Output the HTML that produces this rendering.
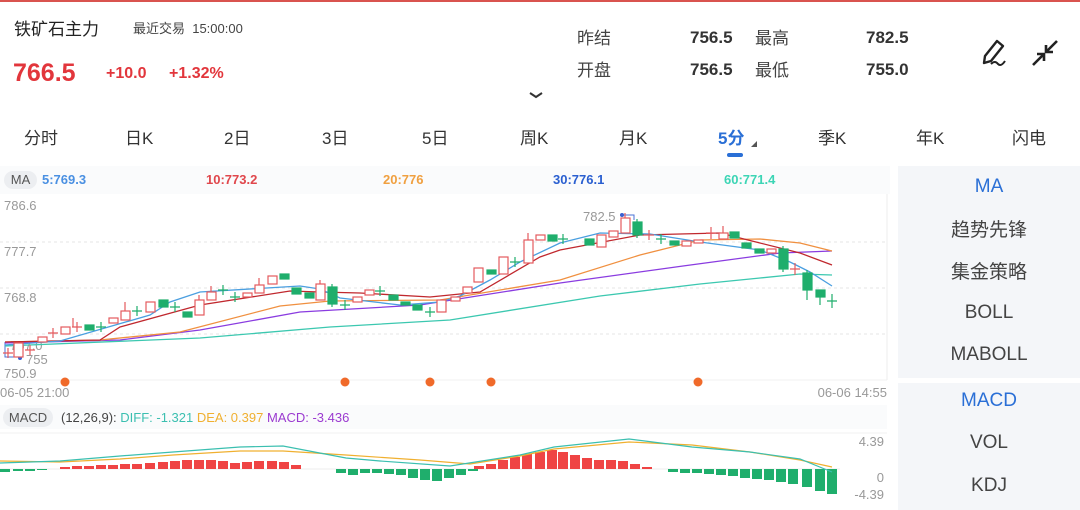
<!DOCTYPE html>
<html><head><meta charset="utf-8"><style>
*{margin:0;padding:0;box-sizing:border-box}
body{width:1080px;height:510px;overflow:hidden;background:#fff;font-family:"Liberation Sans","Noto Sans CJK SC",sans-serif;position:relative;color:#333}
.a{position:absolute;white-space:nowrap}
.tab{position:absolute;top:124px;font-size:17px;color:#333}
.rp{position:absolute;left:898px;width:182px;background:#f4f6f9}
.ri{position:absolute;width:182px;text-align:center;font-size:19px;color:#444}
</style></head><body>
<div class="a" style="left:0;top:0;width:1080px;height:2px;background:#d9534f"></div>
<div class="a" style="left:14px;top:15px;font-size:17px;color:#222">铁矿石主力</div>
<div class="a" style="left:133px;top:18px;font-size:13px;color:#444">最近交易&nbsp;&nbsp;15:00:00</div>
<div class="a" style="left:13px;top:59px;font-size:25px;font-weight:bold;color:#e2363c">766.5</div>
<div class="a" style="left:106px;top:65px;font-size:16px;font-weight:bold;color:#e2363c">+10.0</div>
<div class="a" style="left:169px;top:65px;font-size:16px;font-weight:bold;color:#e2363c">+1.32%</div>
<div class="a" style="left:577px;top:24px;font-size:17px;color:#444">昨结</div>
<div class="a" style="left:690px;top:28px;font-size:17px;font-weight:bold;color:#333">756.5</div>
<div class="a" style="left:755px;top:24px;font-size:17px;color:#444">最高</div>
<div class="a" style="left:866px;top:28px;font-size:17px;font-weight:bold;color:#333">782.5</div>
<div class="a" style="left:577px;top:56px;font-size:17px;color:#444">开盘</div>
<div class="a" style="left:690px;top:60px;font-size:17px;font-weight:bold;color:#333">756.5</div>
<div class="a" style="left:755px;top:56px;font-size:17px;color:#444">最低</div>
<div class="a" style="left:866px;top:60px;font-size:17px;font-weight:bold;color:#333">755.0</div>
<svg class="a" style="left:0;top:0" width="1080" height="166">
<path d="M530 93 L536 97 L542 93" fill="none" stroke="#333" stroke-width="2"/>
<path d="M985 56 L997 41 L1003 46 L991 61 L984 63 Z" fill="none" stroke="#222" stroke-width="2.4" stroke-linejoin="round"/>
<path d="M991 64 q4 -4 7 0 q3 3 7 -3" fill="none" stroke="#222" stroke-width="2"/>
<path d="M1057 41 L1047 51 M1046 45 V52 H1053 M1033 65 L1043 55 M1044 61 V54 H1037" fill="none" stroke="#222" stroke-width="2.6"/>
<rect x="727" y="153" width="16" height="4" rx="2" fill="#2a6fd6"/>
<path d="M751 147 L757 147 L757 141 Z" fill="#555"/>
</svg>
<div class="tab" style="left:24px">分时</div>
<div class="tab" style="left:125px">日K</div>
<div class="tab" style="left:224px">2日</div>
<div class="tab" style="left:322px">3日</div>
<div class="tab" style="left:422px">5日</div>
<div class="tab" style="left:520px">周K</div>
<div class="tab" style="left:619px">月K</div>
<div class="tab" style="left:718px;color:#2a6fd6;font-weight:bold">5分</div>
<div class="tab" style="left:818px">季K</div>
<div class="tab" style="left:916px">年K</div>
<div class="tab" style="left:1012px">闪电</div>

<div class="a" style="left:0;top:166px;width:890px;height:28px;background:#fafbfc"></div>
<div class="a" style="left:4px;top:171px;width:33px;height:18px;border-radius:9px;background:#eceef1;font-size:13px;color:#555;text-align:center;line-height:18px">MA</div>
<div class="a" style="left:42px;top:172px;font-size:13px;font-weight:bold;color:#4a90e2">5:769.3</div>
<div class="a" style="left:206px;top:172px;font-size:13px;font-weight:bold;color:#e0474c">10:773.2</div>
<div class="a" style="left:383px;top:172px;font-size:13px;font-weight:bold;color:#f0a040">20:776</div>
<div class="a" style="left:553px;top:172px;font-size:13px;font-weight:bold;color:#2a5fd0">30:776.1</div>
<div class="a" style="left:724px;top:172px;font-size:13px;font-weight:bold;color:#3cd5b5">60:771.4</div>

<div class="rp" style="top:166px;height:212px"></div>
<div class="rp" style="top:383px;height:127px"></div>
<div class="ri" style="left:898px;top:176px;color:#2a6fd6">MA</div>
<div class="ri" style="left:898px;top:215px">趋势先锋</div>
<div class="ri" style="left:898px;top:257px">集金策略</div>
<div class="ri" style="left:898px;top:302px">BOLL</div>
<div class="ri" style="left:898px;top:344px">MABOLL</div>
<div class="ri" style="left:898px;top:390px;color:#2a6fd6">MACD</div>
<div class="ri" style="left:898px;top:432px">VOL</div>
<div class="ri" style="left:898px;top:475px">KDJ</div>

<svg class="a" style="left:0;top:194px" width="890" height="316" viewBox="0 194 890 316">
<g stroke="#e6e6e6" stroke-dasharray="3 3" stroke-width="1">
<line x1="0" y1="242" x2="887" y2="242"/><line x1="0" y1="288" x2="887" y2="288"/><line x1="0" y1="334" x2="887" y2="334"/>
</g>
<line x1="887" y1="194" x2="887" y2="380" stroke="#eee"/>
<line x1="0" y1="380" x2="887" y2="380" stroke="#f0f0f0"/>
<g font-size="13" fill="#999" font-family="Liberation Sans,sans-serif">
<text x="4" y="210">786.6</text><text x="4" y="256">777.7</text><text x="4" y="302">768.8</text><text x="4" y="378">750.9</text>
<text x="26" y="364">755</text><text x="583" y="221">782.5</text>
<text x="10" y="350">757.0</text>
</g>
<path d="M5 342 V357 H20 M20 357 " fill="none" stroke="#4a72d6" stroke-width="1"/>
<circle cx="20" cy="358" r="2" fill="#3a5fd0"/>
<path d="M620 215 H634 V220" fill="none" stroke="#4a72d6"/><circle cx="622" cy="215" r="2" fill="#3a5fd0"/>
<g fill="none" stroke-width="1.3">
<polyline stroke="#3cc8b0" points="5,346 200,338 330,327 450,320 600,296 700,284 760,278 800,274 832,275"/>
<polyline stroke="#8a3ce0" points="5,343 120,340 200,330 300,312 420,305 560,283 683,266 780,253 832,251"/>
<polyline stroke="#f09040" points="5,342 100,340 180,332 280,306 330,301 440,300 560,280 640,255 700,240 760,239 800,243 832,251"/>
<polyline stroke="#c0282e" points="5,342 100,340 120,327 200,305 290,291 320,292 360,293 430,297 480,292 540,257 560,250 640,235 720,233 760,243 800,253 832,265"/>
<polyline stroke="#4a9fe0" points="5,345 60,341 150,315 170,302 200,292 300,286 320,289 340,298 400,305 440,302 460,296 490,280 520,262 560,243 600,233 650,234 700,242 760,250 790,262 810,272 832,286"/>
</g>
<g fill="#fff" stroke="#e45a5e" stroke-width="1.2">
<path d="M8 348V358M3 353H13M30 345V355M25 350H35M53 328V338M48 333H58M77 322V332M72 327H82M649 230V240M644 235H654M711 227V239M706 233H716M795 263V275M790 269H800"/>
<rect x="14" y="343" width="9" height="14"/><rect x="38" y="337" width="9" height="5"/>
<rect x="61" y="327" width="9" height="7"/><rect x="109" y="318" width="9" height="5"/>
<rect x="121" y="311" width="9" height="9"/><rect x="146" y="302" width="9" height="10"/>
<rect x="195" y="300" width="9" height="15"/><rect x="207" y="292" width="9" height="8"/>
<rect x="243" y="293" width="9" height="4"/><rect x="255" y="285" width="9" height="8"/>
<rect x="268" y="276" width="9" height="8"/><rect x="316" y="284" width="9" height="16"/>
<rect x="353" y="297" width="9" height="5"/><rect x="365" y="290" width="9" height="5"/>
<rect x="437" y="300" width="9" height="12"/><rect x="451" y="297" width="9" height="4"/>
<rect x="463" y="287" width="9" height="6"/><rect x="474" y="268" width="9" height="14"/>
<rect x="499" y="257" width="9" height="17"/><rect x="524" y="240" width="9" height="23"/>
<rect x="536" y="235" width="9" height="5"/><rect x="597" y="235" width="9" height="12"/>
<rect x="609" y="231" width="9" height="6"/><rect x="621" y="218" width="9" height="15"/>
<rect x="682" y="241" width="9" height="5"/><rect x="694" y="240" width="9" height="3"/>
<rect x="719" y="233" width="9" height="6"/><rect x="767" y="249" width="9" height="4"/>
<path d="M125 302V311M73 318V327M199 295V300M259 278V285M320 280V284M528 233V240M625 213V218M723 226V233M211 286V292"/>
</g>
<g fill="#1fae6c" stroke="#1fae6c" stroke-width="1.2">
<path d="M101 322V332M96 327H106M137 306V316M132 311H142M175 302V312M170 307H180M223 285V295M218 290H228M235 292V302M230 297H240M345 300V310M340 305H350M380 286V296M375 291H385M430 307V317M425 312H435M515 257V267M510 262H520M563 234V244M558 239H568M661 234V244M656 239H666M832 294V308M827 301H837"/>
<rect x="85" y="325" width="9" height="5"/><rect x="159" y="300" width="9" height="7"/>
<rect x="183" y="312" width="9" height="5"/><rect x="280" y="274" width="9" height="5"/>
<rect x="292" y="288" width="9" height="6"/><rect x="305" y="293" width="9" height="5"/>
<rect x="328" y="287" width="9" height="17"/><rect x="389" y="295" width="9" height="5"/>
<rect x="401" y="302" width="9" height="3"/><rect x="413" y="305" width="9" height="5"/>
<rect x="487" y="270" width="9" height="4"/><rect x="548" y="235" width="9" height="6"/>
<rect x="585" y="239" width="9" height="6"/><rect x="633" y="222" width="9" height="13"/>
<rect x="670" y="241" width="9" height="4"/><rect x="730" y="232" width="9" height="6"/>
<rect x="742" y="243" width="9" height="5"/><rect x="755" y="249" width="9" height="4"/>
<rect x="779" y="249" width="9" height="20"/><rect x="803" y="273" width="9" height="17"/>
<rect x="816" y="290" width="9" height="7"/>
<path d="M783 246V272M807 270V300M820 297V305M637 219V238M332 284V307"/>
</g>
<g fill="#f06a2a"><circle cx="65" cy="382" r="4.5"/><circle cx="345" cy="382" r="4.5"/><circle cx="430" cy="382" r="4.5"/><circle cx="491" cy="382" r="4.5"/><circle cx="698" cy="382" r="4.5"/></g>
<g font-size="13" fill="#999" font-family="Liberation Sans,sans-serif">
<text x="0" y="397">06-05 21:00</text><text x="887" y="397" text-anchor="end">06-06 14:55</text>
<text x="884" y="446" text-anchor="end">4.39</text><text x="884" y="482" text-anchor="end">0</text><text x="884" y="499" text-anchor="end">-4.39</text>
</g>
<rect x="0" y="405" width="887" height="24" fill="#fafbfc"/>
<rect x="3" y="408" width="50" height="19" rx="9.5" fill="#eceef1"/>
<text x="28" y="422" font-size="13" fill="#555" text-anchor="middle">MACD</text>
<text x="61" y="422" font-size="13" fill="#444">(12,26,9):<tspan fill="#3bbfb0"> DIFF: -1.321</tspan><tspan fill="#f0b030"> DEA: 0.397</tspan><tspan fill="#9b3ad0"> MACD: -3.436</tspan></text>
<line x1="0" y1="433" x2="887" y2="433" stroke="#f2f2f2"/>
<line x1="0" y1="469" x2="840" y2="469" stroke="#eee"/>
<path stroke="#ef4444" stroke-width="10" fill="none" d="M65 469v-2M77 469v-3M89 469v-3M101 469v-4M113 469v-4M125 469v-5M137 469v-5M150 469v-6M163 469v-7M175 469v-8M187 469v-9M199 469v-9M211 469v-9M223 469v-8M235 469v-6M247 469v-7M259 469v-8M272 469v-8M284 469v-7M296 469v-4M479 469v-3M491 469v-5M503 469v-9M515 469v-12M527 469v-15M540 469v-17M552 469v-19M563 469v-17M575 469v-14M587 469v-11M599 469v-9M611 469v-9M623 469v-8M635 469v-5M647 469v-2"/>
<path stroke="#1fae6c" stroke-width="10" fill="none" d="M5 469v3M18 469v2M30 469v2M42 469v1M341 469v4M353 469v6M365 469v4M377 469v4M389 469v5M401 469v6M413 469v9M425 469v11M437 469v12M449 469v9M461 469v6M473 469v2M673 469v3M685 469v4M697 469v4M709 469v5M721 469v6M733 469v7M745 469v9M757 469v10M769 469v11M781 469v13M793 469v15M807 469v18M820 469v22M832 469v25"/>
<g fill="none" stroke-width="1.2">
<polyline stroke="#f0b030" points="0,461 60,462 120,459 173,455 240,451 283,451 346,455 420,460 470,464 520,456 554,449 629,442 692,445 750,452 800,460 832,467"/>
<polyline stroke="#3bbfb0" points="0,463 60,461 120,456 173,452 240,447 283,446 346,458 380,461 450,466 520,455 554,447 629,439 692,447 750,452 800,459 832,472"/>
</g>
</svg>
</body></html>
